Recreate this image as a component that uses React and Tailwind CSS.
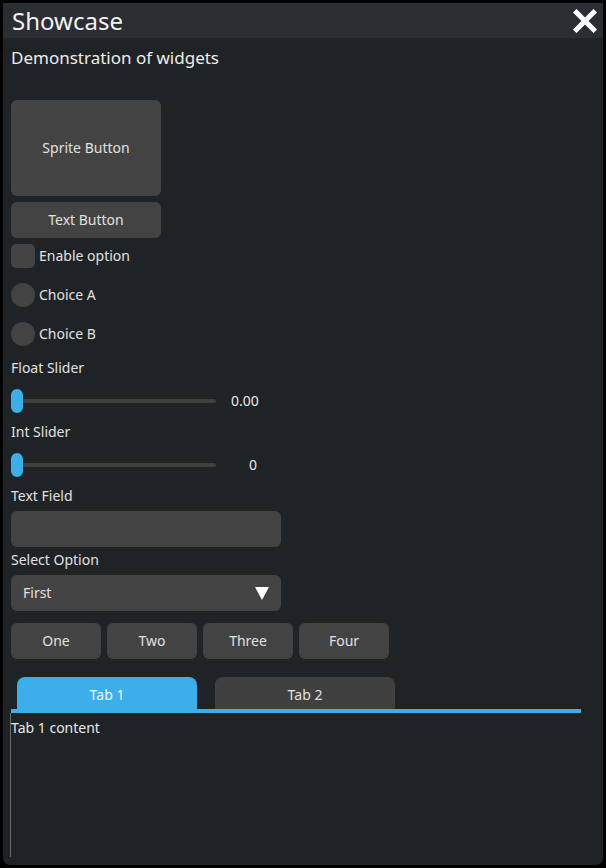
import React from "react";

const font = { fontFamily: '"Noto Sans", "Open Sans", sans-serif' };

function Label({ children, className = "" }) {
  return <div className={"text-[14px] leading-[20px] text-[#e0e0e0] " + className}>{children}</div>;
}

function Slider({ value, valueClass }) {
  return (
    <div className="flex items-center h-[24px]">
      <div className="relative w-[205px] h-[24px] flex items-center">
        <div className="ml-[5px] w-[200px] h-[4px] rounded-full bg-[#3f3f3f]" />
        <div className="absolute left-0 top-0 w-[12px] h-[24px] rounded-full bg-[#3daee9]" />
      </div>
      <div className={"text-[14px] leading-[20px] text-[#e8e8e8] " + valueClass}>{value}</div>
    </div>
  );
}

export default function App() {
  return (
    <div className="w-[606px] h-[868px] bg-black p-[3px]" style={font}>
      <div className="w-[600px] h-[862px] rounded-b-[7px] bg-[#202326] flex flex-col overflow-hidden">
        <div className="h-[35px] bg-[#2a2d32] flex items-center justify-between pl-[9px] pr-[6px] shrink-0">
          <div className="text-[24px] leading-[32px] text-[#f2f2f2]">Showcase</div>
          <svg width="24" height="24" viewBox="0 0 24 24">
            <path d="M3.5 3.5 L20.5 20.5 M20.5 3.5 L3.5 20.5" stroke="#ffffff" strokeWidth="5" strokeLinecap="square" />
          </svg>
        </div>
        <div className="flex flex-col flex-1 px-[8px] pb-[8px]">
          <div className="mt-[9px] text-[17px] leading-[22px] text-[#ececec]">Demonstration of widgets</div>

          <div className="mt-[31px] w-[150px] h-[96px] rounded-[6px] bg-[#434343] flex items-center justify-center pb-[2px] text-[14px] text-[#e0e0e0]">
            Sprite Button
          </div>
          <div className="mt-[6px] w-[150px] h-[36px] rounded-[6px] bg-[#434343] flex items-center justify-center pb-[2px] text-[14px] text-[#e0e0e0]">
            Text Button
          </div>

          <div className="mt-[6px] flex items-center h-[24px] gap-[4px]">
            <div className="w-[24px] h-[24px] rounded-[5px] bg-[#434343]" />
            <Label>Enable option</Label>
          </div>
          <div className="mt-[15px] flex items-center h-[24px] gap-[4px]">
            <div className="w-[24px] h-[24px] rounded-full bg-[#434343]" />
            <Label>Choice A</Label>
          </div>
          <div className="mt-[15px] flex items-center h-[24px] gap-[4px]">
            <div className="w-[24px] h-[24px] rounded-full bg-[#434343]" />
            <Label>Choice B</Label>
          </div>

          <Label className="mt-[12px]">Float Slider</Label>
          <div className="mt-[11px]">
            <Slider value="0.00" valueClass="ml-[15px]" />
          </div>
          <Label className="mt-[9px]">Int Slider</Label>
          <div className="mt-[11px]">
            <Slider value="0" valueClass="ml-[33px]" />
          </div>

          <Label className="mt-[9px]">Text Field</Label>
          <div className="mt-[5px] w-[270px] h-[36px] rounded-[6px] bg-[#434343]" />

          <Label className="mt-[3px]">Select Option</Label>
          <div className="mt-[5px] w-[270px] h-[36px] rounded-[6px] bg-[#434343] flex items-center justify-between pl-[12px] pr-[12px]">
            <span className="text-[14px] leading-[20px] text-[#e0e0e0] -mt-px">First</span>
            <svg width="14" height="13" viewBox="0 0 14 13">
              <polygon points="0,0 14,0 7,13" fill="#ffffff" />
            </svg>
          </div>

          <div className="mt-[12px] flex gap-[6px]">
            {["One", "Two", "Three", "Four"].map((t) => (
              <div key={t} className="w-[90px] h-[36px] rounded-[6px] bg-[#434343] flex items-center justify-center pb-[2px] text-[14px] text-[#e0e0e0]">
                {t}
              </div>
            ))}
          </div>

          <div className="mt-[18px] w-[570px] flex flex-col">
            <div className="flex gap-[18px] pl-[6px]">
              <div className="w-[180px] h-[32px] rounded-t-[8px] bg-[#3daee9] flex items-center justify-center pt-[2px] text-[14px] text-[#f4f4f4]">
                Tab 1
              </div>
              <div className="w-[180px] h-[32px] rounded-t-[8px] bg-[#404040] flex items-center justify-center pt-[2px] text-[14px] text-[#e0e0e0]">
                Tab 2
              </div>
            </div>
            <div className="h-[4px] bg-[#3daee9]" />
          </div>
          <div className="flex-1 -ml-px border-l border-[#6a6a6a] pt-[5px] pl-0">
            <div className="text-[14px] leading-[20px] text-[#e8e8e8]">Tab 1 content</div>
          </div>
        </div>
      </div>
    </div>
  );
}
